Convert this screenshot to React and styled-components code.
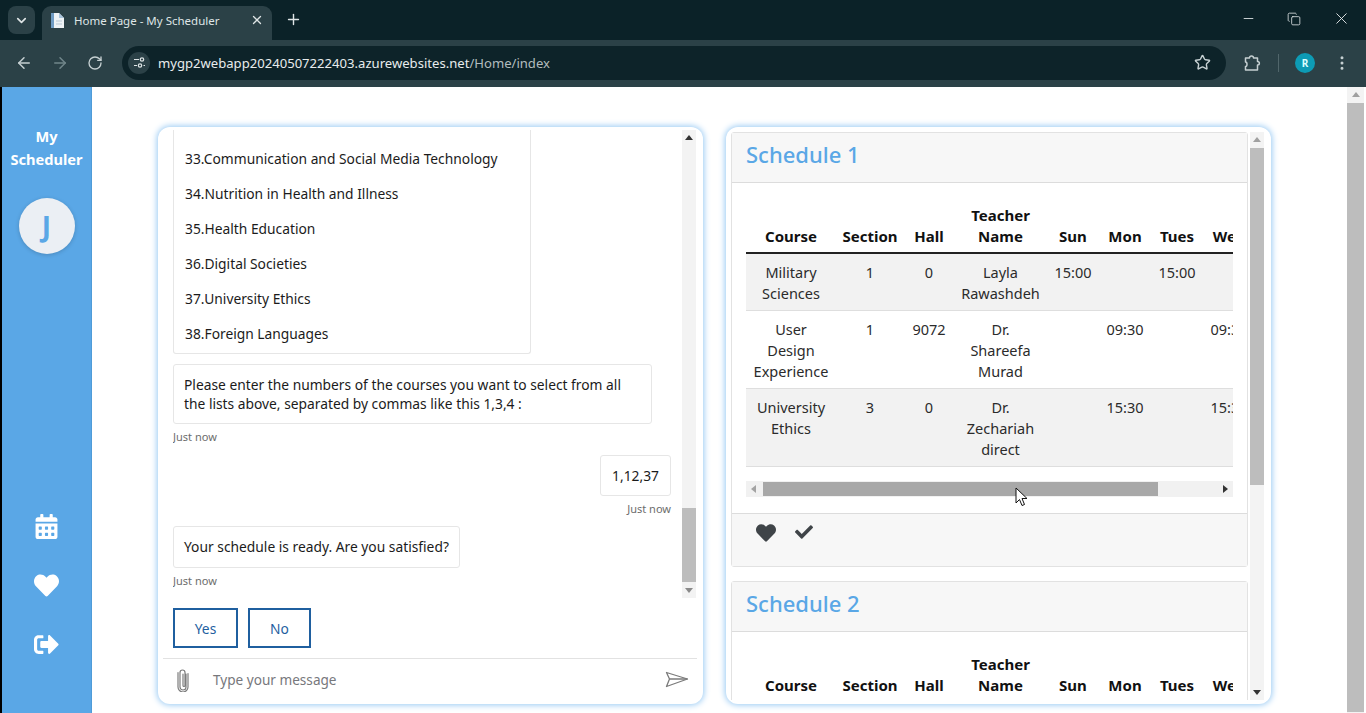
import React from 'react';
import styled, { createGlobalStyle } from 'styled-components';
import { ArrowLeft, ArrowRight, ChevronDown, Copy, EllipsisVertical, Minus, Plus, RotateCw, Star, X } from 'lucide-react';
import { FaCalendarAlt, FaCheck, FaHeart, FaSignOutAlt } from 'react-icons/fa';

const SANS = '"Noto Sans", "Open Sans", sans-serif';
const BLUE = '#5aa7e6';

const GlobalStyle = createGlobalStyle`
  html, body {
    margin: 0;
    height: 100%;
    overflow: hidden;
    background: #fff;
  }
  #root {
    height: 100%;
  }
  * {
    box-sizing: border-box;
  }
`;

const Shell = styled.div`
  display: flex;
  flex-direction: column;
  height: 713px;
  font-family: ${SANS};
  position: relative;
`;

/* browser chrome */
const TabStrip = styled.div`
  display: flex;
  align-items: flex-end;
  height: 40px;
  padding-left: 8px;
  background: #0b2228;
  color: #dfe5e6;
`;

const TabMenu = styled.div`
  display: flex;
  align-items: center;
  justify-content: center;
  width: 27px;
  height: 28px;
  margin-bottom: 6px;
  border-radius: 8px;
  background: #2b4147;
`;

const Tab = styled.div`
  display: flex;
  align-items: center;
  width: 230px;
  height: 34px;
  margin-left: 7px;
  padding: 0 8px 6px;
  border-radius: 9px 9px 0 0;
  background: #2b4147;
  font-size: 11.5px;
  white-space: nowrap;
`;

const TabTitle = styled.span`
  flex: 1;
  margin-left: 9px;
`;

const NewTab = styled.div`
  display: flex;
  align-items: center;
  margin: 0 0 12px 13px;
`;

const WindowButtons = styled.div`
  display: flex;
  align-items: center;
  gap: 31px;
  margin: 0 15px 12px auto;
`;

const Toolbar = styled.div`
  display: flex;
  align-items: center;
  height: 47px;
  padding: 0 15px 2px;
  background: #2b4147;
  color: #c6d0d2;
`;

const NavButtons = styled.div`
  display: flex;
  align-items: center;
  gap: 18px;
`;

const Omnibox = styled.div`
  display: flex;
  align-items: center;
  width: 1104px;
  height: 34px;
  margin-left: 19px;
  padding: 0 15px 0 6px;
  border-radius: 17px;
  background: #0d2329;
`;

const SiteChip = styled.div`
  display: flex;
  align-items: center;
  justify-content: center;
  width: 22px;
  height: 22px;
  border-radius: 50%;
  background: #2b4147;
`;

const Url = styled.div`
  flex: 1;
  margin-left: 8px;
  font-size: 13.1px;
  color: #e8eced;

  span {
    color: #b2bcbe;
  }
`;

const ToolbarEnd = styled.div`
  display: flex;
  align-items: center;
  margin-left: 17px;
`;

const Divider = styled.div`
  width: 1px;
  height: 18px;
  margin: 0 16px 0 17px;
  background: #51666b;
`;

const Avatar = styled.div`
  display: flex;
  align-items: center;
  justify-content: center;
  width: 20px;
  height: 20px;
  margin-right: 18px;
  border-radius: 50%;
  background: #0d9bb5;
  color: #dff;
  font-size: 10px;
  font-weight: 700;
`;

/* page */
const Page = styled.div`
  flex: 1;
  display: flex;
  min-height: 0;
  border-left: 2px solid #000;
`;

const Sidebar = styled.nav`
  display: flex;
  flex-direction: column;
  align-items: center;
  width: 90px;
  padding: 38px 0 56px;
  background: ${BLUE};
  border-right: 1px solid #4f9bd8;
  color: #fff;
`;

const Brand = styled.div`
  font-size: 14.6px;
  font-weight: 700;
  line-height: 23px;
  text-align: center;
`;

const UserBadge = styled.div`
  display: flex;
  align-items: center;
  justify-content: center;
  width: 56px;
  height: 56px;
  margin-top: 27px;
  border-radius: 50%;
  background: #ebeff4;
  box-shadow: 0 1px 4px rgba(0, 0, 0, 0.18);
  color: ${BLUE};
  font-size: 28px;
  font-weight: 700;
`;

const SideIcons = styled.div`
  display: flex;
  flex-direction: column;
  align-items: center;
  gap: 34px;
  margin-top: auto;
`;

const Main = styled.main`
  flex: 1;
  display: flex;
  gap: 23px;
  padding: 40px 0 9px 66px;
`;

const Panel = styled.section`
  display: flex;
  flex-direction: column;
  width: 545px;
  border-radius: 12px;
  background: #fff;
  box-shadow: 0 0 6px 1px #97c9f3;
  overflow: hidden;
`;

/* scrollbars */
const VTrack = styled.div`
  display: flex;
  flex-direction: column;
  flex: none;
  width: ${(p) => p.$width}px;
  margin-left: ${(p) => p.$offset || 0}px;
  background: #f3f3f3;
`;

const Arrow = styled.div`
  flex: none;
  width: 0;
  height: 0;
  margin: ${(p) => (p.$down ? '6px auto 5px' : '5px auto 6px')};
  border-left: 4px solid transparent;
  border-right: 4px solid transparent;
  ${(p) => (p.$down ? `border-top: 5px solid ${p.$color};` : `border-bottom: 5px solid ${p.$color};`)}
`;

const Lane = styled.div`
  flex: 1;
  min-height: 0;
`;

const VThumb = styled.div`
  margin-top: ${(p) => p.$top}px;
  height: ${(p) => p.$size}px;
  background: #bdbdbd;
`;

const HTrack = styled.div`
  display: flex;
  align-items: center;
  height: 16px;
  margin-top: 14px;
  background: #f1f1f1;
`;

const HArrow = styled.div`
  flex: none;
  width: 0;
  height: 0;
  margin: ${(p) => (p.$right ? '0 5px 0 auto' : '0 5px 0 5px')};
  border-top: 4px solid transparent;
  border-bottom: 4px solid transparent;
  ${(p) => (p.$right ? 'border-left: 5px solid #333;' : 'border-right: 5px solid #a3a3a3;')}
`;

const HThumb = styled.div`
  width: 395px;
  height: 14px;
  margin-left: 2px;
  background: #a8a8a8;
`;

/* chat */
const ChatBody = styled.div`
  flex: 1;
  display: flex;
  min-height: 0;
  padding: 3px 7px 0 15px;
`;

const ChatLog = styled.div`
  flex: 1;
  display: flex;
  flex-direction: column;
  min-width: 0;
  padding-right: 11px;
  overflow: hidden;
  font-size: 13.8px;
  color: #1b1b1b;
`;

const CourseList = styled.ul`
  flex: none;
  width: 358px;
  margin: 0;
  padding: 11px 10px 2px 11px;
  list-style: none;
  border: 1px solid #e6e6e6;
  border-top: 0;
  border-radius: 0 0 3px 3px;
`;

const CourseItem = styled.li`
  height: 35px;
  line-height: 35px;
  white-space: nowrap;
`;

const Bubble = styled.div`
  flex: none;
  align-self: ${(p) => (p.$mine ? 'flex-end' : 'flex-start')};
  margin-top: ${(p) => p.$gap}px;
  padding: 10px 10px ${(p) => (p.$tall ? 11 : 10)}px;
  max-width: 479px;
  width: ${(p) => (p.$width ? `${p.$width}px` : 'auto')};
  border: 1px solid #e6e6e6;
  border-radius: 3px;
  line-height: 19px;
  text-align: ${(p) => (p.$mine ? 'center' : 'left')};
`;

const Stamp = styled.div`
  flex: none;
  align-self: ${(p) => (p.$mine ? 'flex-end' : 'flex-start')};
  margin-top: 6px;
  font-size: 11px;
  line-height: 14px;
  color: #6d6d6d;
`;

const Replies = styled.div`
  display: flex;
  gap: 10px;
  padding: 10px 15px;
`;

const ReplyButton = styled.button`
  width: ${(p) => p.$width}px;
  height: 40px;
  padding: 0;
  border: 2px solid #1f5f9f;
  border-radius: 0;
  background: #fff;
  color: #1f5f9f;
  font-family: inherit;
  font-size: 13.8px;
`;

const Composer = styled.div`
  display: flex;
  align-items: center;
  height: 46px;
  margin: 0 6px 0 5px;
  padding: 0 8px 4px 13px;
  border-top: 1px solid #e2e2e2;
`;

const MessageInput = styled.div`
  flex: 1;
  margin-left: 23px;
  font-size: 13.6px;
  color: #77787c;
`;

/* schedules */
const ScheduleBody = styled.div`
  flex: 1;
  display: flex;
  min-height: 0;
  padding: 5px 8px 4px 5px;
`;

const ScheduleList = styled.div`
  flex: none;
  display: flex;
  flex-direction: column;
  gap: 14px;
  width: 517px;
  overflow: hidden;
`;

const Card = styled.article`
  flex: none;
  border: 1px solid #e2e2e2;
  border-radius: 3px;
`;

const CardHeader = styled.header`
  height: 50px;
  padding: 0 14px;
  background: #f7f7f7;
  border-bottom: 1px solid #dcdcdc;
  color: ${BLUE};
  font-size: 22px;
  font-weight: 500;
  line-height: 42px;
`;

const CardBody = styled.div`
  padding: 14px 14px 16px;
`;

const TableClip = styled.div`
  overflow: hidden;
`;

const Table = styled.table`
  width: 509px;
  table-layout: fixed;
  border-collapse: collapse;
  font-size: 14.5px;
  line-height: 21px;
  color: #2b2b2b;
`;

const HeadCell = styled.th`
  width: ${(p) => p.$width}px;
  padding: 8px 0 5px;
  border-bottom: 2px solid #222;
  color: #111;
  font-size: 15px;
  font-weight: 700;
  text-align: center;
  vertical-align: bottom;
  white-space: pre-line;
`;

const Row = styled.tr`
  background: ${(p) => (p.$shaded ? '#f2f2f2' : '#fff')};
  border-bottom: 1px solid #dedede;
`;

const Cell = styled.td`
  padding: 8px 0 6px;
  text-align: center;
  vertical-align: top;
  white-space: pre-line;
`;

const CardFooter = styled.footer`
  display: flex;
  align-items: flex-start;
  gap: 19px;
  height: 53px;
  padding: 9px 24px;
  background: #f7f7f7;
  border-top: 1px solid #dcdcdc;
  color: #3f4448;
  font-size: 20px;
`;

const PageScroll = styled(VTrack)`
  margin-right: 2px;
`;

const Pointer = styled.svg`
  position: absolute;
  left: 1015px;
  top: 487px;
`;

const columns = [
  ['Course', 90],
  ['Section', 68],
  ['Hall', 50],
  ['Teacher\nName', 93],
  ['Sun', 52],
  ['Mon', 52],
  ['Tues', 52],
  ['Wed', 52],
];

const rows = [
  ['Military\nSciences', '1', '0', 'Layla\nRawashdeh', '15:00', '', '15:00', ''],
  ['User\nDesign\nExperience', '1', '9072', 'Dr.\nShareefa\nMurad', '', '09:30', '', '09:30'],
  ['University\nEthics', '3', '0', 'Dr.\nZechariah\ndirect', '', '15:30', '', '15:30'],
];

const courses = [
  '33.Communication and Social Media Technology',
  '34.Nutrition in Health and Illness',
  '35.Health Education',
  '36.Digital Societies',
  '37.University Ethics',
  '38.Foreign Languages',
];

const ScheduleTable = () => (
  <TableClip>
    <Table>
      <thead>
        <tr>
          {columns.map(([label, width]) => (
            <HeadCell key={label} $width={width}>{label}</HeadCell>
          ))}
        </tr>
      </thead>
      <tbody>
        {rows.map((row, i) => (
          <Row key={row[0]} $shaded={i % 2 === 0}>
            {row.map((value, j) => (
              <Cell key={j}>{value}</Cell>
            ))}
          </Row>
        ))}
      </tbody>
    </Table>
  </TableClip>
);

const Favicon = () => (
  <svg width="15" height="17" viewBox="0 0 15 17">
    <path d="M1 1h8l5 5v10H1z" fill="#eef3f6" />
    <path d="M9 1l5 5H9z" fill="#a9c4dc" />
    <path d="M1 1h3v15H1z" fill="#6f9cc4" />
    <path d="M6 9h6M6 12h6" stroke="#b9c9d6" strokeWidth="1" />
  </svg>
);

const SiteTune = () => (
  <svg width="13" height="13" viewBox="0 0 13 13" fill="none" stroke="#dfe5e6" strokeWidth="1.2">
    <path d="M1 3.500h5M1 9.500h3" />
    <circle cx="9" cy="3.500" r="1.700" />
    <circle cx="7" cy="9.500" r="1.700" />
    <path d="M10.500 9.500H12" />
  </svg>
);

const ExtensionPiece = () => (
  <svg width="18" height="18" viewBox="0 0 18 18" fill="none" stroke="#c6d0d2" strokeWidth="1.500" strokeLinejoin="round">
    <path d="M2.500 4H6.500C6.500 1.300 10.500 1.300 10.500 4H14.500V7.500C17 7.500 17 11 14.500 11V16H2.500V12.500C4.500 12.500 4.500 8 2.500 8z" />
  </svg>
);

const PaperClip = () => (
  <svg width="14" height="24" viewBox="0 0 14 24" fill="none" stroke="#7c7c7c" strokeWidth="1.200" strokeLinecap="round">
    <path d="M10 6v13a3 3 0 0 1-6 0V4.500a2.500 2.500 0 0 1 5 0V17.500a1 1 0 0 1-2 0V6" />
    <path d="M12 5.500V19a5 5 0 0 1-10 0V4.500" />
  </svg>
);

const SendPlane = () => (
  <svg width="24" height="17" viewBox="0 0 24 17" fill="none" stroke="#7b7b7b" strokeWidth="1.300" strokeLinejoin="round">
    <path d="M1.500 1.500L22.500 8 1.500 15.500 4.500 8z" />
    <path d="M4.500 8h18" />
  </svg>
);

const App = () => (
  <Shell>
    <GlobalStyle />
    <TabStrip>
      <TabMenu><ChevronDown size={15} strokeWidth={2.6} /></TabMenu>
      <Tab>
        <Favicon />
        <TabTitle>Home Page - My Scheduler</TabTitle>
        <X size={14} strokeWidth={2.2} />
      </Tab>
      <NewTab><Plus size={17} strokeWidth={2} /></NewTab>
      <WindowButtons>
        <Minus size={15} strokeWidth={1.4} />
        <Copy size={14} strokeWidth={1.4} />
        <X size={19} strokeWidth={1.2} />
      </WindowButtons>
    </TabStrip>
    <Toolbar>
      <NavButtons>
        <ArrowLeft size={18} />
        <ArrowRight size={18} color="#71868b" />
        <RotateCw size={16} />
      </NavButtons>
      <Omnibox>
        <SiteChip><SiteTune /></SiteChip>
        <Url>mygp2webapp20240507222403.azurewebsites.net<span>/Home/index</span></Url>
        <Star size={17} />
      </Omnibox>
      <ToolbarEnd>
        <ExtensionPiece />
        <Divider />
        <Avatar>R</Avatar>
        <EllipsisVertical size={18} />
      </ToolbarEnd>
    </Toolbar>
    <Page>
      <Sidebar>
        <Brand>My<br />Scheduler</Brand>
        <UserBadge>J</UserBadge>
        <SideIcons>
          <FaCalendarAlt size={25} />
          <FaHeart size={25} />
          <FaSignOutAlt size={25} />
        </SideIcons>
      </Sidebar>
      <Main>
        <Panel>
          <ChatBody>
            <ChatLog>
              <CourseList>
                {courses.map((course) => (
                  <CourseItem key={course}>{course}</CourseItem>
                ))}
              </CourseList>
              <Bubble $gap={10} $width={479}>
                Please enter the numbers of the courses you want to select from all the lists above, separated by commas like this 1,3,4 :
              </Bubble>
              <Stamp>Just now</Stamp>
              <Bubble $mine $gap={11} $width={71}>1,12,37</Bubble>
              <Stamp $mine>Just now</Stamp>
              <Bubble $gap={10} $tall>Your schedule is ready. Are you satisfied?</Bubble>
              <Stamp>Just now</Stamp>
            </ChatLog>
            <VTrack $width={14}>
              <Arrow $color="#333" />
              <Lane><VThumb $top={362} $size={74} /></Lane>
              <Arrow $down $color="#8a8a8a" />
            </VTrack>
          </ChatBody>
          <Replies>
            <ReplyButton $width={65}>Yes</ReplyButton>
            <ReplyButton $width={63}>No</ReplyButton>
          </Replies>
          <Composer>
            <PaperClip />
            <MessageInput>Type your message</MessageInput>
            <SendPlane />
          </Composer>
        </Panel>
        <Panel>
          <ScheduleBody>
            <ScheduleList>
              <Card>
                <CardHeader>Schedule 1</CardHeader>
                <CardBody>
                  <ScheduleTable />
                  <HTrack>
                    <HArrow />
                    <HThumb />
                    <HArrow $right />
                  </HTrack>
                </CardBody>
                <CardFooter>
                  <FaHeart />
                  <FaCheck size={18} />
                </CardFooter>
              </Card>
              <Card>
                <CardHeader>Schedule 2</CardHeader>
                <CardBody>
                  <ScheduleTable />
                </CardBody>
              </Card>
            </ScheduleList>
            <VTrack $width={14} $offset={2}>
              <Arrow $color="#a0a0a0" />
              <Lane><VThumb $top={0} $size={337} /></Lane>
              <Arrow $down $color="#333" />
            </VTrack>
          </ScheduleBody>
        </Panel>
      </Main>
      <PageScroll $width={17}>
        <Arrow $color="#a0a0a0" />
        <Lane><VThumb $top={0} $size={609} /></Lane>
      </PageScroll>
    </Page>
    <Pointer width="13" height="20" viewBox="0 0 13 20">
      <path d="M1 1v15l3.500-3.500 2.500 6 2.500-1-2.500-6h5z" fill="#fff" stroke="#111" strokeWidth="1" strokeLinejoin="round" />
    </Pointer>
  </Shell>
);

export default App;
